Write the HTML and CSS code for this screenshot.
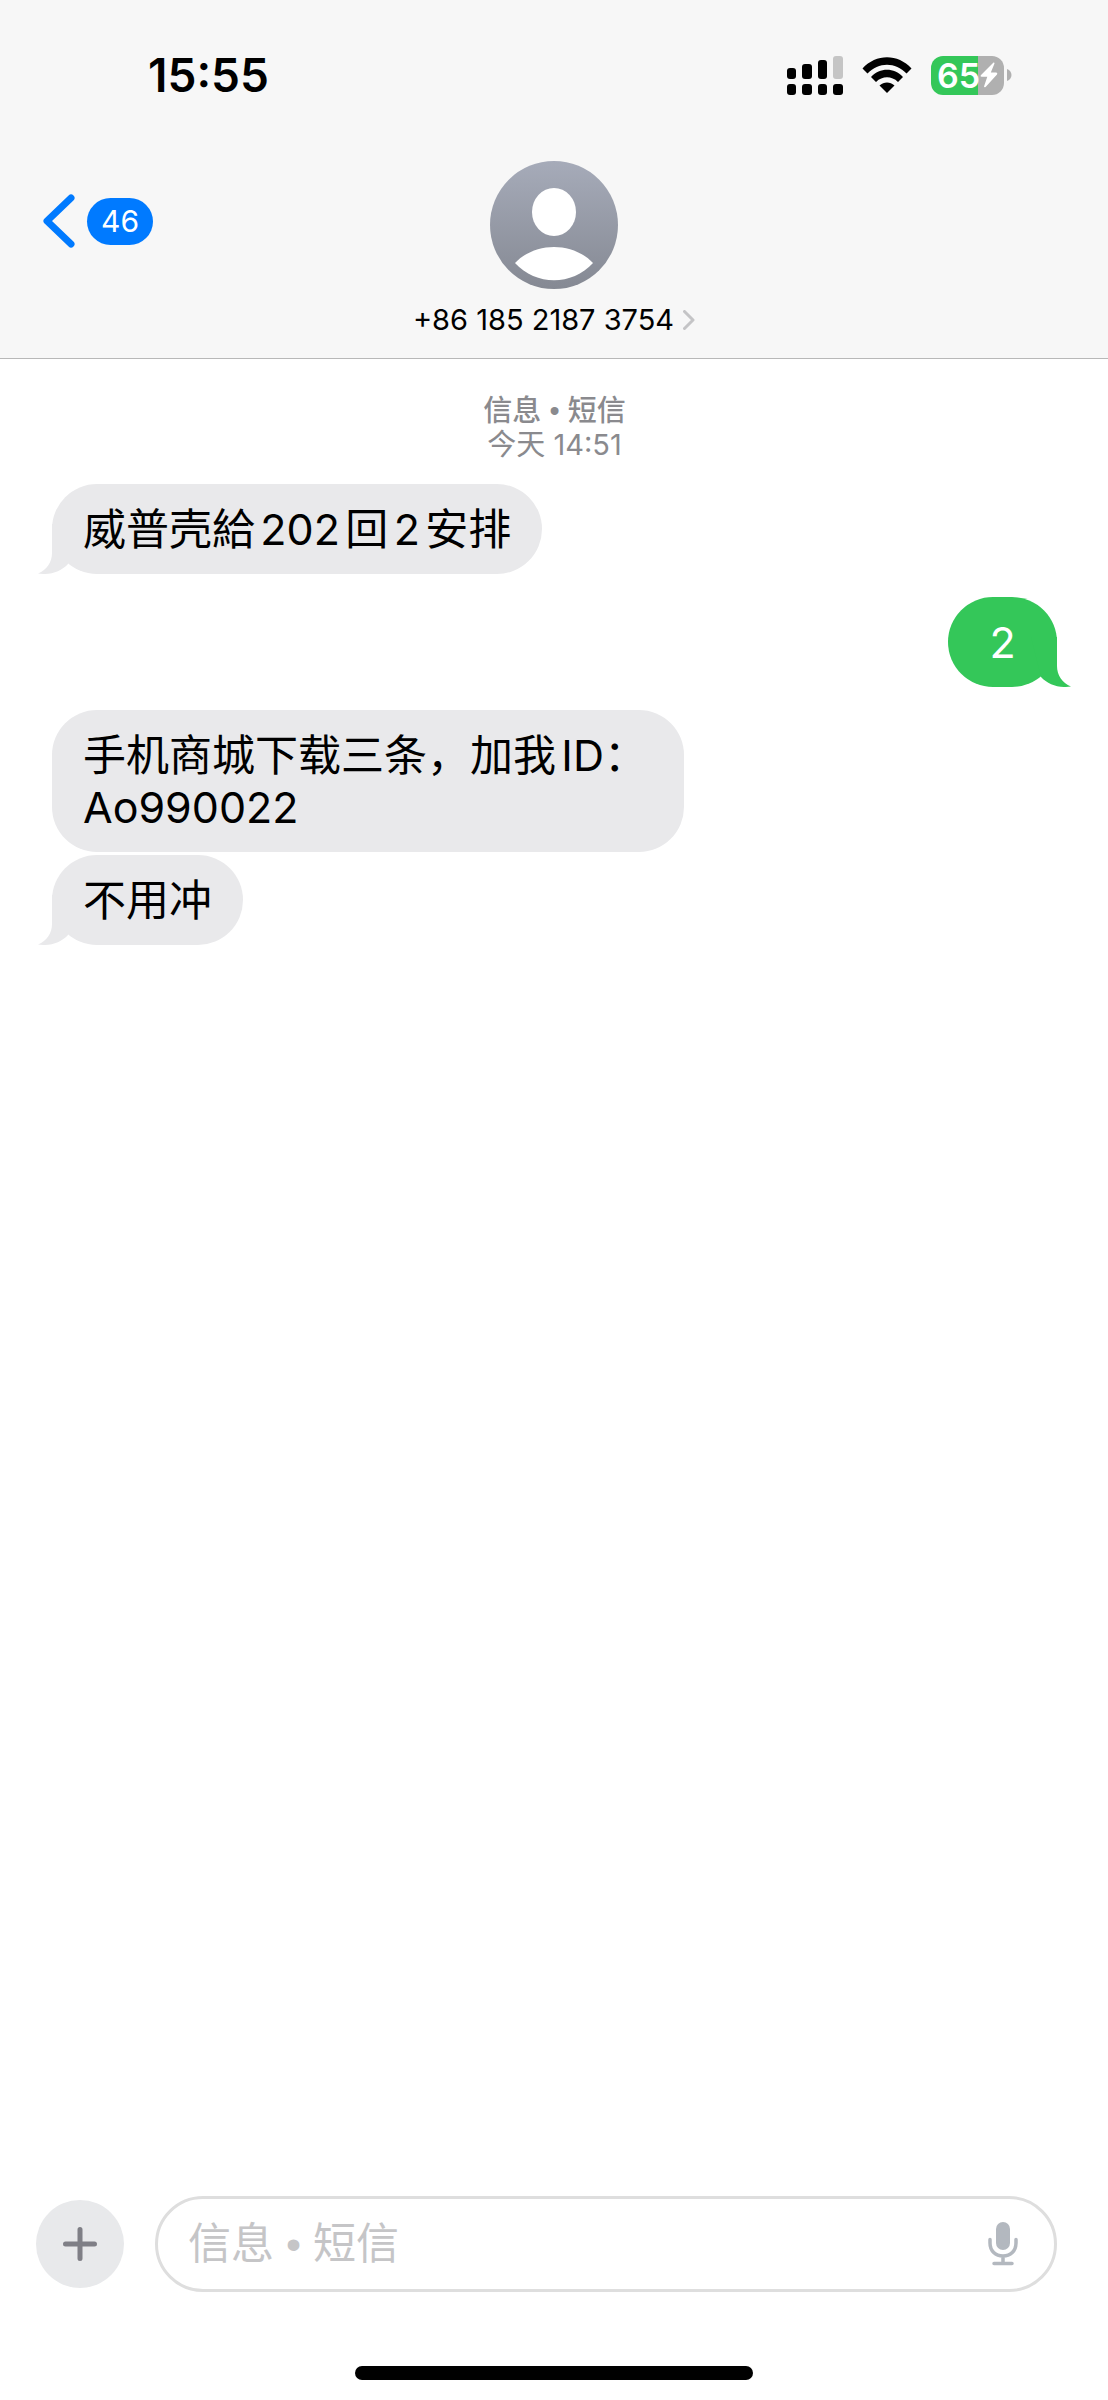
FILE: index.html
```html
<!DOCTYPE html>
<html lang="zh-CN">
<head>
    <meta charset="utf-8">
    <meta name="viewport" content="width=device-width, initial-scale=1">
    <title>信息</title>
    <link rel="stylesheet" href="styles.css">
</head>
<body>
    <header class="header">
        <div class="status-bar">
            <span class="time">15:55</span>
            <div class="status-icons">
                <svg class="signal" width="56" height="39" viewBox="0 0 56 39">
                    <rect x="0" y="12" width="9" height="11" rx="3"/>
                    <rect x="15" y="8" width="10" height="15" rx="3"/>
                    <rect x="31" y="4" width="9" height="19" rx="3"/>
                    <rect x="46" y="0" width="10" height="23" rx="3" fill="#c5c5c5"/>
                    <rect x="0" y="28" width="9" height="11" rx="3"/>
                    <rect x="15" y="28" width="10" height="11" rx="3"/>
                    <rect x="31" y="28" width="9" height="11" rx="3"/>
                    <rect x="46" y="28" width="10" height="11" rx="3"/>
                </svg>
                <svg class="wifi" width="50" height="37" viewBox="0 0 50 37">
                    <path d="M0.5 11.5C14 -3.5 36 -3.5 49.5 11.5L44.5 16.5C33.500 4.800 16.500 4.800 5.500 16.500Z"/>
                    <path d="M9 20C18 10.300 32 10.300 41 20L36 25C29.500 18.800 20.500 18.800 14 25Z"/>
                    <path d="M17.500 28.500C22 24.500 28 24.500 32.500 28.500L25 36Z"/>
                </svg>
                <div class="battery">
                    <div class="battery-body">
                        <span>65</span>
                        <svg width="18" height="26" viewBox="0 0 18 26">
                            <path d="M13.500 0.500L0.800 13.200Q0 14.500 1.500 14.800H7.300L4 24.500Q4.300 26 5.800 24.800L17 12.500Q18 11 16.300 10.500H10.800L14.500 1.500Q14.600 0.200 13.500 0.500Z" fill="#fff"/>
                        </svg>
                    </div>
                    <svg width="5" height="12" viewBox="0 0 5 12">
                        <path d="M0 0C6 2 6 10 0 12Z" fill="#b0b0b0"/>
                    </svg>
                </div>
            </div>
        </div>

        <div class="nav">
            <a class="back" href="#" aria-label="返回">
                <svg width="32" height="54" viewBox="0 0 32 54">
                    <path d="M28 4L4 27L28 50" fill="none" stroke="#007aff" stroke-width="7" stroke-linecap="round" stroke-linejoin="round"/>
                </svg>
                <span class="unread">46</span>
            </a>
            <a class="contact" href="#">
                <svg width="128" height="128" viewBox="0 0 128 128">
                    <defs>
                        <linearGradient id="avatarFill" x1="0" y1="0" x2="0" y2="1">
                            <stop offset="0" stop-color="#a6abb9"/>
                            <stop offset="1" stop-color="#858993"/>
                        </linearGradient>
                    </defs>
                    <circle cx="64" cy="64" r="64" fill="url(#avatarFill)"/>
                    <ellipse cx="64" cy="51" rx="22" ry="24" fill="#fff"/>
                    <path d="M25 102C45 80.500 83 80.500 103 102C82 125 46 125 25 102Z" fill="#fff"/>
                </svg>
                <span class="number">
                    +86 185 2187 3754
                    <svg width="12" height="20" viewBox="0 0 12 20">
                        <path d="M1.500 1.500L10 10L1.500 18.500" fill="none" stroke="#c4c4c6" stroke-width="3" stroke-linecap="round" stroke-linejoin="round"/>
                    </svg>
                </span>
            </a>
        </div>
    </header>

    <main class="messages">
        <p class="stamp"><strong>信息 • 短信</strong><br>今天 14:51</p>
        <div class="bubble received">威普壳給202回2安排
            <svg class="tail" width="40" height="50" viewBox="0 0 40 50">
                <path d="M14 0V29C14 38 9 46 0 49.500C12 51.500 23 47.500 30 40L40 0Z"/>
            </svg>
        </div>
        <div class="bubble sent">2
            <svg class="tail" width="40" height="50" viewBox="0 0 40 50">
                <path d="M26 0V29C26 38 31 46 40 49.500C28 51.500 17 47.500 10 40L0 0Z"/>
            </svg>
        </div>
        <div class="bubble received">手机商城下载三条，加我ID：Ao990022</div>
        <div class="bubble received grouped">不用冲
            <svg class="tail" width="40" height="50" viewBox="0 0 40 50">
                <path d="M14 0V29C14 38 9 46 0 49.500C12 51.500 23 47.500 30 40L40 0Z"/>
            </svg>
        </div>
    </main>

    <footer class="footer">
        <form class="composer">
            <button class="add" type="button" aria-label="添加">
                <svg width="34" height="34" viewBox="0 0 34 34">
                    <path d="M17 2.500V31.500M2.500 17H31.500" stroke="#7f7f86" stroke-width="5" stroke-linecap="round"/>
                </svg>
            </button>
            <div class="field">
                <input type="text" placeholder="信息 • 短信" aria-label="信息 • 短信">
                <button class="mic" type="button" aria-label="听写">
                    <svg width="30" height="44" viewBox="0 0 30 44">
                        <rect x="8" y="0" width="14" height="28" rx="7" fill="#b3b8bf"/>
                        <path d="M2 17.500V21C2 29 7.500 34 15 34S28 29 28 21V17.500M15 34V41M6 41.500H24" fill="none" stroke="#b3b8bf" stroke-width="3.500" stroke-linecap="round"/>
                    </svg>
                </button>
            </div>
        </form>
        <div class="home-bar"></div>
    </footer>
</body>
</html>
```
FILE: styles.css
```css
* {
    box-sizing: border-box;
}
body {
    margin: 0;
    min-height: 100vh;
    display: flex;
    flex-direction: column;
    background: #fff;
    color: #000;
    font-family: Inter, "Noto Sans CJK SC", sans-serif;
}
svg {
    display: block;
    flex: none;
}
a {
    color: inherit;
    text-decoration: none;
}
button {
    border: none;
    padding: 0;
    cursor: pointer;
}

/* header */
.header {
    background: #f7f7f7;
    border-bottom: 1px solid #b8b8b8;
}
.status-bar {
    display: flex;
    justify-content: space-between;
    align-items: center;
    height: 150px;
    padding: 0 96px 0 148px;
}
.time {
    font-size: 46px;
    font-weight: 600;
}
.status-icons {
    display: flex;
    align-items: center;
    gap: 19px;
}
.battery {
    display: flex;
    align-items: center;
    gap: 3px;
}
.battery-body {
    display: flex;
    align-items: center;
    justify-content: center;
    width: 73px;
    height: 39px;
    border-radius: 12px;
    background: linear-gradient(to right, #34c759 65%, #b0b0b0 65%);
    color: #fff;
    font-size: 34px;
    font-weight: 600;
}
.nav {
    display: grid;
    grid-template-columns: 1fr auto 1fr;
    padding: 11px 43px 20px;
}
.back {
    display: flex;
    align-items: center;
    align-self: start;
    justify-self: start;
    gap: 12px;
    margin-top: 33px;
}
.unread {
    padding: 0 14px;
    border-radius: 24px;
    background: #007aff;
    color: #fff;
    font-size: 30px;
    line-height: 47px;
}
.contact {
    display: flex;
    flex-direction: column;
    align-items: center;
    gap: 13px;
}
.number {
    display: flex;
    align-items: center;
    gap: 9px;
    font-size: 29px;
    line-height: 36px;
}

/* conversation */
.messages {
    flex: 1;
    display: flex;
    flex-direction: column;
    align-items: flex-start;
    gap: 23px;
    padding: 35px 51px 35px 52px;
}
.stamp {
    align-self: center;
    margin: 0;
    color: #8a8a8e;
    font-size: 29px;
    line-height: 33px;
    text-align: center;
}
.stamp strong {
    font-family: "Liberation Sans", "Noto Sans CJK SC", sans-serif;
    font-weight: 500;
}
.bubble {
    position: relative;
    min-width: 109px;
    max-width: 632px;
    padding: 19px 31px;
    border-radius: 45px;
    font-size: 43px;
    line-height: 52px;
    text-autospace: normal;
}
.received {
    background: #e9e9eb;
    fill: #e9e9eb;
}
.sent {
    align-self: flex-end;
    background: #34c759;
    fill: #34c759;
    color: #fff;
    text-align: center;
}
.grouped {
    margin-top: -20px;
}
.tail {
    position: absolute;
    bottom: 0;
    left: -14px;
}
.sent .tail {
    left: auto;
    right: -14px;
}

/* composer */
.footer {
    padding-bottom: 20px;
}
.composer {
    display: flex;
    align-items: center;
    gap: 31px;
    padding: 0 51px 0 36px;
}
.add {
    display: flex;
    align-items: center;
    justify-content: center;
    width: 88px;
    height: 88px;
    border-radius: 50%;
    background: #e8e9eb;
}
.field {
    flex: 1;
    display: flex;
    align-items: center;
    height: 96px;
    padding: 0 36px 0 30px;
    border: 3px solid #dedede;
    border-radius: 48px;
}
.field input {
    flex: 1;
    min-width: 0;
    padding: 0;
    border: none;
    outline: none;
    background: none;
    font-family: "Liberation Sans", "Noto Sans CJK SC", sans-serif;
    font-size: 43px;
}
.field input::placeholder {
    color: #c5c5c7;
}
.mic {
    background: none;
}
.home-bar {
    width: 36%;
    height: 14px;
    margin: 74px auto 0;
    border-radius: 7px;
    background: #000;
}
```
